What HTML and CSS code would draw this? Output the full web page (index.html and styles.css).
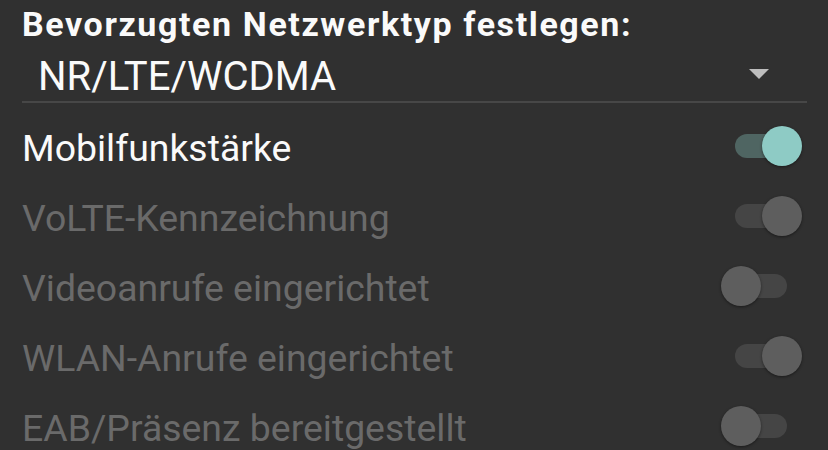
FILE: index.html
```html
<!DOCTYPE html>
<html lang="de">
<head>
  <meta charset="UTF-8">
  <meta name="viewport" content="width=device-width, initial-scale=1.0">
  <title>Netzwerk</title>
  <link rel="stylesheet" href="styles.css">
</head>
<body>
  <div class="panel">
    <div class="title">Bevorzugten Netzwerktyp festlegen:</div>
    <div class="select">
      <span class="select-value">NR/LTE/WCDMA</span>
      <span class="arrow"></span>
    </div>

    <div class="list">
      <div class="row">
        <span class="label">Mobilfunkstärke</span>
        <span class="switch on"><span class="thumb"></span></span>
      </div>
      <div class="row disabled">
        <span class="label">VoLTE-Kennzeichnung</span>
        <span class="switch on"><span class="thumb"></span></span>
      </div>
      <div class="row disabled">
        <span class="label">Videoanrufe eingerichtet</span>
        <span class="switch"><span class="thumb"></span></span>
      </div>
      <div class="row disabled">
        <span class="label">WLAN-Anrufe eingerichtet</span>
        <span class="switch on"><span class="thumb"></span></span>
      </div>
      <div class="row disabled">
        <span class="label">EAB/Präsenz bereitgestellt</span>
        <span class="switch"><span class="thumb"></span></span>
      </div>
    </div>
  </div>
</body>
</html>
```

FILE: styles.css
```css
body {
  margin: 0;
  background-color: #303030;
  font-family: Roboto, "Noto Sans", sans-serif;
  color: #fafafa;
}
.panel {
  padding: 5px 21px 0 22px;
}
.title {
  font-size: 34px;
  font-weight: bold;
  line-height: 39px;
  letter-spacing: 1.6px;
  white-space: nowrap;
}
.select {
  display: flex;
  align-items: center;
  justify-content: space-between;
  height: 57px;
  padding: 0 38px 0 16px;
  border-bottom: 2px solid #474747;
}
.select-value {
  font-size: 40px;
  line-height: 40px;
  padding-top: 8px;
}
.arrow {
  width: 0;
  height: 0;
  margin-top: 3px;
  border-left: 10px solid transparent;
  border-right: 10px solid transparent;
  border-top: 10px solid #bdbdbd;
}
.list {
  margin-top: 8px;
}
.row {
  display: flex;
  align-items: center;
  justify-content: space-between;
  height: 70px;
}
.label {
  font-size: 37.4px;
  margin-top: 4px;
}
.disabled .label {
  color: #6a6a6a;
}
.switch {
  position: relative;
  width: 52px;
  height: 24px;
  margin-right: 20px;
  border-radius: 12px;
  background-color: #454545;
}
.thumb {
  position: absolute;
  top: -8px;
  left: -14px;
  width: 40px;
  height: 40px;
  border-radius: 50%;
  background-color: #5e5e5e;
  box-shadow: 0 1px 3px rgba(0, 0, 0, 0.45);
}
.switch.on .thumb {
  left: 27px;
}
.row:not(.disabled) .switch.on {
  background-color: #4f6562;
}
.row:not(.disabled) .switch.on .thumb {
  background-color: #8ecbc5;
}
```
